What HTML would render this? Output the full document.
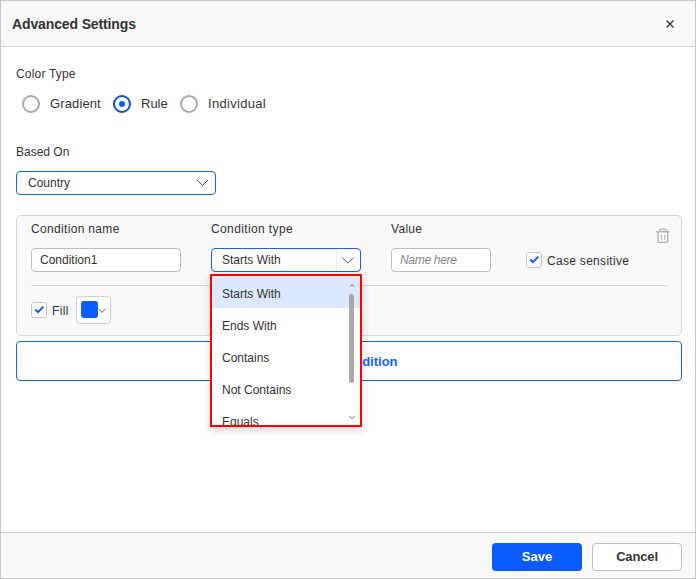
<!DOCTYPE html>
<html><head><meta charset="utf-8">
<style>
*{box-sizing:border-box;margin:0;padding:0}
html,body{width:696px;height:579px;overflow:hidden;background:#fff}
body{font-family:"Liberation Sans",sans-serif;color:#333;position:relative}
.a{position:absolute;white-space:nowrap}
.dlg{position:absolute;left:0;top:0;width:696px;height:579px;border:1px solid #c8c8c8;background:#fff}
.hdr{position:absolute;left:1px;top:1px;width:694px;height:46px;background:#f8f8f8;border-bottom:1px solid #d0d0d0}
.ftr{position:absolute;left:1px;top:532px;width:694px;height:46px;background:#f8f8f8;border-top:1px solid #d0d0d0}
.t12{font-size:12px;line-height:14px}
.t13{font-size:13px;line-height:15px}
.radio{position:absolute;width:18px;height:18px;border-radius:50%;border:2px solid #a8a8a8;background:#fff}
.radio.on{border-color:#0b50c8}
.radio.on::after{content:"";position:absolute;left:4px;top:4px;width:6px;height:6px;border-radius:50%;background:#0a5cff}
.box{position:absolute;background:#fff;border:1px solid #bdbdbd;border-radius:4px}
.blue{border-color:#0f62fe}
.chk{position:absolute;width:16px;height:16px;border:1px solid #c4c4c4;border-radius:3px;background:#fff}
.panel{position:absolute;left:16px;top:215px;width:666px;height:121px;background:#f8f8f8;border:1px solid #d4d4d4;border-radius:5px}
.pop{position:absolute;left:210px;top:274px;width:152px;height:153px;border:2px solid #f00;background:#fff;box-shadow:0 3px 8px rgba(0,0,0,0.18);overflow:hidden}
.item{position:absolute;left:0;width:148px;height:32px}
</style></head><body>
<div class="dlg"></div>
<div class="hdr"></div>
<div class="a" style="left:12px;top:16px;font-size:14px;line-height:16px;font-weight:bold;color:#333;letter-spacing:-0.13px">Advanced Settings</div>
<svg class="a" style="left:665px;top:19px" width="10" height="10" viewBox="0 0 10 10"><path d="M1.5 1.5L8.5 8.5M8.5 1.5L1.5 8.5" stroke="#333" stroke-width="1.4"/></svg>

<div class="a t12" style="left:16px;top:67px;letter-spacing:0.19px">Color Type</div>
<div class="radio" style="left:22px;top:95px"></div>
<div class="a t13" style="left:50px;top:96px;letter-spacing:0.12px">Gradient</div>
<div class="radio on" style="left:113px;top:95px"></div>
<div class="a t13" style="left:141px;top:96px">Rule</div>
<div class="radio" style="left:180px;top:95px"></div>
<div class="a t13" style="left:208px;top:96px;letter-spacing:0.3px">Individual</div>

<div class="a t12" style="left:16px;top:145px">Based On</div>
<div class="box blue" style="left:16px;top:171px;width:200px;height:24px"></div>
<div class="a t12" style="left:28px;top:176px">Country</div>
<svg class="a" style="left:196px;top:179px" width="13" height="8" viewBox="0 0 13 8"><path d="M1 1L6.5 6.5L12 1" fill="none" stroke="#555" stroke-width="1"/></svg>

<div class="panel"></div>
<div class="a t12" style="left:31px;top:222px;letter-spacing:0.33px">Condition name</div>
<div class="a t12" style="left:211px;top:222px;letter-spacing:0.38px">Condition type</div>
<div class="a t12" style="left:391px;top:222px;letter-spacing:0.3px">Value</div>
<div class="box" style="left:31px;top:248px;width:150px;height:24px"></div>
<div class="a t12" style="left:40px;top:253px">Condition1</div>
<div class="box blue" style="left:211px;top:248px;width:150px;height:24px"></div>
<div class="a" style="left:336px;top:249px;width:1px;height:22px;background:#eee"></div>
<div class="a t12" style="left:222px;top:253px">Starts With</div>
<svg class="a" style="left:341px;top:256px" width="13" height="9" viewBox="0 0 13 9"><path d="M1.5 1.8L6.8 7L12 1.8" fill="none" stroke="#4a4a4a" stroke-width="1"/></svg>
<div class="box" style="left:391px;top:248px;width:100px;height:24px"></div>
<div class="a t12" style="left:400px;top:253px;font-style:italic;color:#888;letter-spacing:-0.3px">Name here</div>
<div class="chk" style="left:526px;top:252px"></div>
<svg class="a" style="left:526px;top:252px" width="16" height="16" viewBox="0 0 16 16"><path d="M4.2 7.6L7 10.1L12.3 4.6" fill="none" stroke="#0a5cff" stroke-width="2"/></svg>
<div class="a t12" style="left:547px;top:254px;letter-spacing:0.3px">Case sensitive</div>
<svg class="a" style="left:655px;top:227px" width="16" height="18" viewBox="0 0 16 18"><g fill="none" stroke="#b3b3b3"><path d="M4.6 4.4V3.2Q4.6 2.2 5.6 2.2H10.2Q11.2 2.2 11.2 3.2V4.4" stroke-width="1.3"/><path d="M1.2 4.7H14.4" stroke-width="1.6"/><path d="M3 5V14.3Q3 15.4 4.1 15.4H11.5Q12.6 15.4 12.6 14.3V5" stroke-width="1.4"/><path d="M6.25 8V12.8M9.7 8V12.8" stroke-width="1.1"/></g></svg>
<div class="a" style="left:31px;top:285px;width:636px;height:1px;background:#d6d6d6"></div>
<div class="chk" style="left:31px;top:302px"></div>
<svg class="a" style="left:31px;top:302px" width="16" height="16" viewBox="0 0 16 16"><path d="M4.2 7.6L7 10.1L12.3 4.6" fill="none" stroke="#0a5cff" stroke-width="2"/></svg>
<div class="a t12" style="left:52px;top:304px;letter-spacing:0.35px">Fill</div>
<div class="box" style="left:76px;top:296px;width:35px;height:28px;border-color:#cfcfcf;border-radius:4px"></div>
<div class="a" style="left:81px;top:301px;width:17px;height:17px;background:#0a5cff;border-radius:3px"></div>
<svg class="a" style="left:98px;top:308px" width="8" height="6" viewBox="0 0 8 6"><path d="M0.8 1L4 4.5L7.2 1" fill="none" stroke="#666" stroke-width="1"/></svg>

<div class="box blue" style="left:16px;top:341px;width:666px;height:40px;border-radius:4px"></div>
<div class="a" style="left:308px;top:354px;font-size:13px;line-height:15px;font-weight:bold;color:#0f62fe">Add Condition</div>

<div class="pop">
  <div class="item" style="top:0;background:#dce8fb"></div>
  <div class="a t12" style="left:10px;top:11px">Starts With</div>
  <div class="a t12" style="left:10px;top:43px">Ends With</div>
  <div class="a t12" style="left:10px;top:75px">Contains</div>
  <div class="a t12" style="left:10px;top:107px">Not Contains</div>
  <div class="a t12" style="left:10px;top:139px">Equals</div>
  <div class="a" style="left:137px;top:18px;width:5px;height:89px;border-radius:3px;background:#a8a8a8"></div>
  <svg class="a" style="left:137px;top:7px" width="6" height="5" viewBox="0 0 6 5"><path d="M1 3.6L3 1.4L5 3.6" fill="none" stroke="#555" stroke-width="0.9"/></svg>
  <svg class="a" style="left:137px;top:139px" width="6" height="5" viewBox="0 0 6 5"><path d="M0.8 1.2L3 3.6L5.2 1.2" fill="none" stroke="#555" stroke-width="0.9"/></svg>
</div>

<div class="ftr"></div>
<div class="a" style="left:492px;top:543px;width:90px;height:28px;background:#0a5cff;border-radius:4px"></div>
<div class="a" style="left:492px;top:549px;width:90px;text-align:center;font-size:13px;line-height:15px;font-weight:bold;color:#fff">Save</div>
<div class="box" style="left:592px;top:543px;width:90px;height:28px;border-color:#bdbdbd"></div>
<div class="a" style="left:592px;top:549px;width:90px;text-align:center;font-size:13px;line-height:15px;font-weight:bold;color:#333;letter-spacing:-0.15px">Cancel</div>
</body></html>
